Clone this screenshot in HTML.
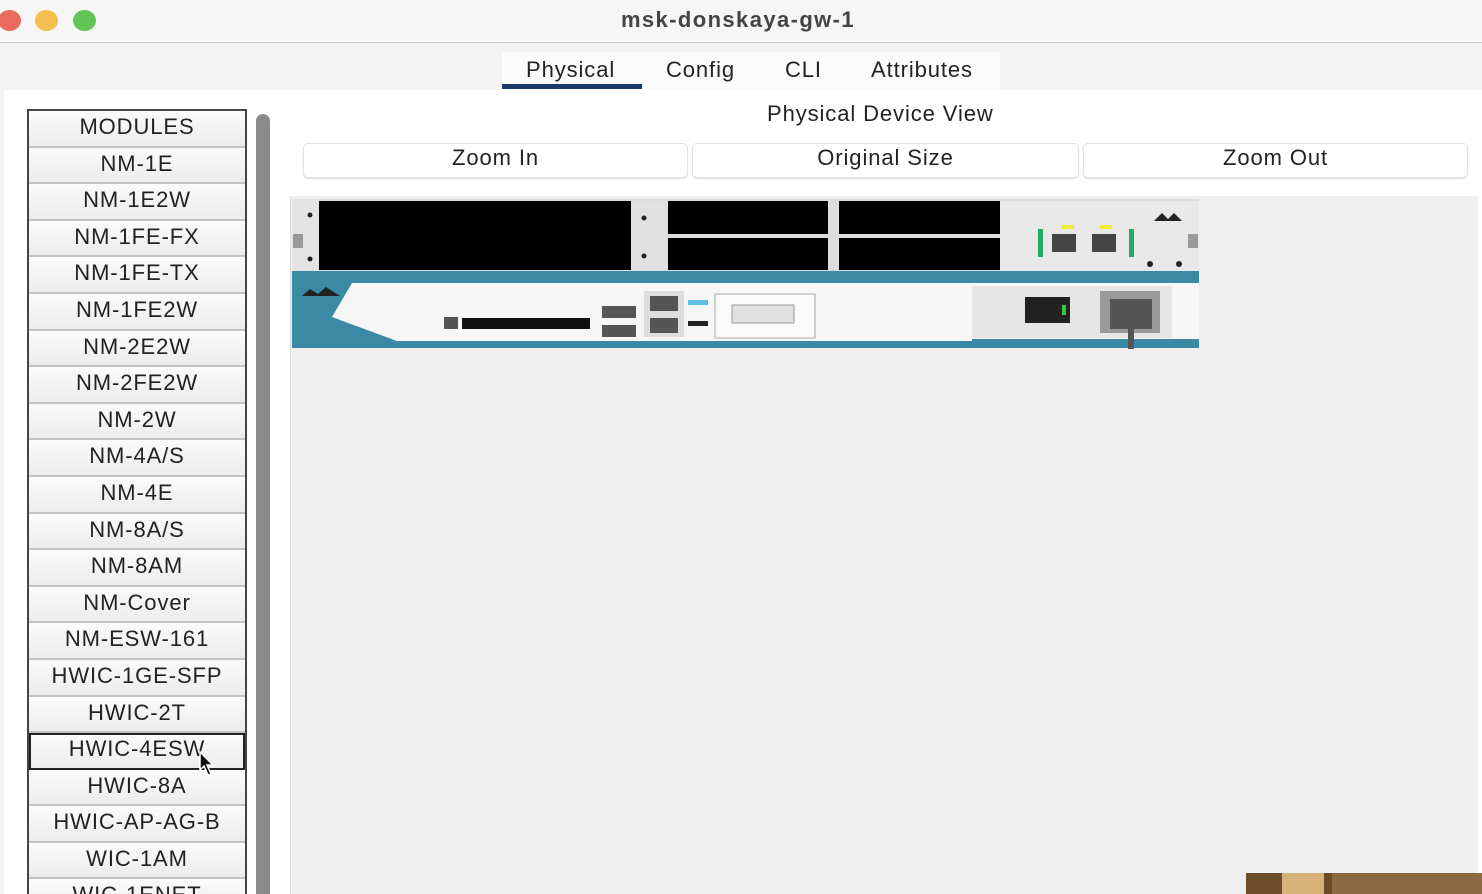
<!DOCTYPE html>
<html><head><meta charset="utf-8"><style>
*{margin:0;padding:0;box-sizing:border-box}
html{width:1482px;height:894px;overflow:hidden}
body{width:1482px;height:894px;overflow:hidden;background:#f3f3f3;font-family:"Liberation Sans",Arial,sans-serif;position:relative;color:#222;letter-spacing:0.9px}
.title{position:absolute;left:0;top:0;width:1482px;height:43px;background:#f6f6f6;border-bottom:1px solid #c8c8c8}
.title .t{position:absolute;left:0;width:1476px;text-align:center;top:7px;font-size:22px;color:#444;font-weight:bold;letter-spacing:1.4px}
.dot{position:absolute;top:10px;width:23px;height:21px;border-radius:50%}
.tabs{position:absolute;top:52px;left:502px;height:38px;width:498px;background:#fbfbfb}
.tab{position:absolute;top:5px;font-size:22px;color:#222}
.panel{position:absolute;left:4px;top:90px;width:1478px;height:804px;background:#fff}
.list{position:absolute;left:27px;top:109px;width:220px;border-left:2px solid #444;border-right:2px solid #444;border-top:2px solid #444}
.item{height:36.6px;border-bottom:2px solid #c4c4c4;background:linear-gradient(#fbfbfb,#ececec);text-align:center;font-size:22px;line-height:32px;color:#222;white-space:nowrap}
.sel{outline:2px solid #222;outline-offset:-2px}
.sb{position:absolute;left:256px;top:114px;width:14px;height:790px;background:#8a8a8a;border-radius:7px}
.content{position:absolute;left:290px;top:196px;width:1188px;height:698px;background:#efefef;border-left:1px solid #ddd}
.btn{position:absolute;top:143px;height:35px;background:#fff;border:1px solid #e2e2e2;border-radius:5px;text-align:center;font-size:22px;line-height:28px;box-shadow:0 1px 1px #ddd}
</style></head><body>
<div class="title"><div class="dot" style="left:-2px;background:#ec6a5e"></div><div class="dot" style="left:35px;background:#f4bf4f"></div><div class="dot" style="left:73px;background:#61c554"></div><div class="t">msk-donskaya-gw-1</div></div>
<div class="tabs">
<div class="tab" style="left:24px">Physical</div><div style="position:absolute;left:0;top:32px;width:140px;height:5px;background:#1d3a6c"></div>
<div class="tab" style="left:164px">Config</div><div class="tab" style="left:283px">CLI</div><div class="tab" style="left:369px">Attributes</div></div>
<div class="panel"></div>
<div style="position:absolute;left:767px;top:101px;font-size:22px">Physical Device View</div>
<div class="btn" style="left:303px;width:385px">Zoom In</div>
<div class="btn" style="left:692px;width:387px">Original Size</div>
<div class="btn" style="left:1083px;width:385px">Zoom Out</div>
<div class="list">
<div class="item">MODULES</div><div class="item">NM-1E</div><div class="item">NM-1E2W</div><div class="item">NM-1FE-FX</div><div class="item">NM-1FE-TX</div><div class="item">NM-1FE2W</div><div class="item">NM-2E2W</div><div class="item">NM-2FE2W</div><div class="item">NM-2W</div><div class="item">NM-4A/S</div><div class="item">NM-4E</div><div class="item">NM-8A/S</div><div class="item">NM-8AM</div><div class="item">NM-Cover</div><div class="item">NM-ESW-161</div><div class="item">HWIC-1GE-SFP</div><div class="item">HWIC-2T</div><div class="item sel">HWIC-4ESW</div><div class="item">HWIC-8A</div><div class="item">HWIC-AP-AG-B</div><div class="item">WIC-1AM</div><div class="item">WIC-1ENET</div>
</div>
<svg style="position:absolute;left:198px;top:750px" width="20" height="28" viewBox="0 0 20 28"><path d="M2 2 L2 20 L6 16 L10 25 L13 24 L9 15 L15 15 Z" fill="#111" stroke="#fff" stroke-width="1.5"/></svg>
<div class="sb"></div>
<div class="content"></div>
<svg style="position:absolute;left:292px;top:199px" width="907" height="150" viewBox="0 0 907 150">
<rect x="0" y="0" width="907" height="72" fill="#dcdcdc"/>
<rect x="0" y="0" width="28" height="72" fill="#e4e4e4"/>
<rect x="27" y="2" width="312" height="69" fill="#000"/>
<rect x="339" y="2" width="36" height="69" fill="#e0e0e0"/>
<rect x="376" y="2" width="160" height="33" fill="#000"/><rect x="376" y="39" width="160" height="32" fill="#000"/>
<rect x="547" y="2" width="161" height="33" fill="#000"/><rect x="547" y="39" width="161" height="32" fill="#000"/>
<rect x="708" y="2" width="199" height="70" fill="#e8e8e8"/>
<rect x="1" y="35" width="10" height="14" fill="#999"/><rect x="896" y="35" width="10" height="14" fill="#999"/>
<circle cx="18" cy="16" r="2.5" fill="#222"/><circle cx="18" cy="60" r="2.5" fill="#222"/>
<circle cx="352" cy="19" r="2.5" fill="#222"/><circle cx="352" cy="57" r="2.5" fill="#222"/>
<rect x="760" y="35" width="24" height="18" fill="#444"/><rect x="800" y="35" width="24" height="18" fill="#444"/>
<rect x="746" y="30" width="5" height="28" fill="#2a6"/><rect x="837" y="30" width="5" height="28" fill="#2a6"/>
<rect x="770" y="26" width="12" height="4" fill="#ee3"/><rect x="808" y="26" width="12" height="4" fill="#ee3"/>
<circle cx="858" cy="65" r="3" fill="#222"/><circle cx="887" cy="65" r="3" fill="#222"/>
<path d="M862 22 L870 14 L876 20 L882 14 L890 22 Z" fill="#222"/>
<rect x="0" y="72" width="907" height="77" fill="#3a8aa6"/>
<path d="M60 84 L680 84 L680 142 L105 142 L40 118 Z" fill="#f6f6f6"/>
<path d="M520 84 L907 84 L907 140 L520 140 Z" fill="#f6f6f6"/>
<rect x="680" y="87" width="200" height="52" fill="#e6e6e6"/>
<path d="M10 97 L18 90 L26 95 L34 88 L48 97 Z" fill="#222"/>
<rect x="152" y="118" width="14" height="12" fill="#555"/>
<rect x="170" y="119" width="128" height="11" fill="#111"/>
<rect x="310" y="107" width="34" height="12" fill="#555"/><rect x="310" y="126" width="34" height="12" fill="#555"/>
<rect x="352" y="92" width="40" height="46" fill="#ddd"/><rect x="358" y="97" width="28" height="15" fill="#555"/><rect x="358" y="119" width="28" height="15" fill="#555"/>
<rect x="396" y="101" width="20" height="5" fill="#5bc0e6"/><rect x="396" y="122" width="20" height="5" fill="#222"/>
<rect x="423" y="95" width="100" height="44" fill="#fafafa" stroke="#aaa"/><rect x="440" y="106" width="62" height="18" fill="#e0e0e0" stroke="#999"/>
<rect x="733" y="98" width="45" height="26" fill="#222"/><rect x="770" y="106" width="4" height="10" fill="#3c3"/>
<rect x="808" y="92" width="60" height="42" fill="#999"/><rect x="818" y="100" width="42" height="30" fill="#555"/>
<rect x="836" y="112" width="6" height="38" fill="#555"/>
</svg>
<div style="position:absolute;left:1246px;top:873px;width:236px;height:21px;background:#6b4d2a"></div>
<div style="position:absolute;left:1282px;top:873px;width:42px;height:21px;background:#d6b27a"></div>
<div style="position:absolute;left:1332px;top:873px;width:150px;height:21px;background:#8a6a40"></div>
</body></html>
